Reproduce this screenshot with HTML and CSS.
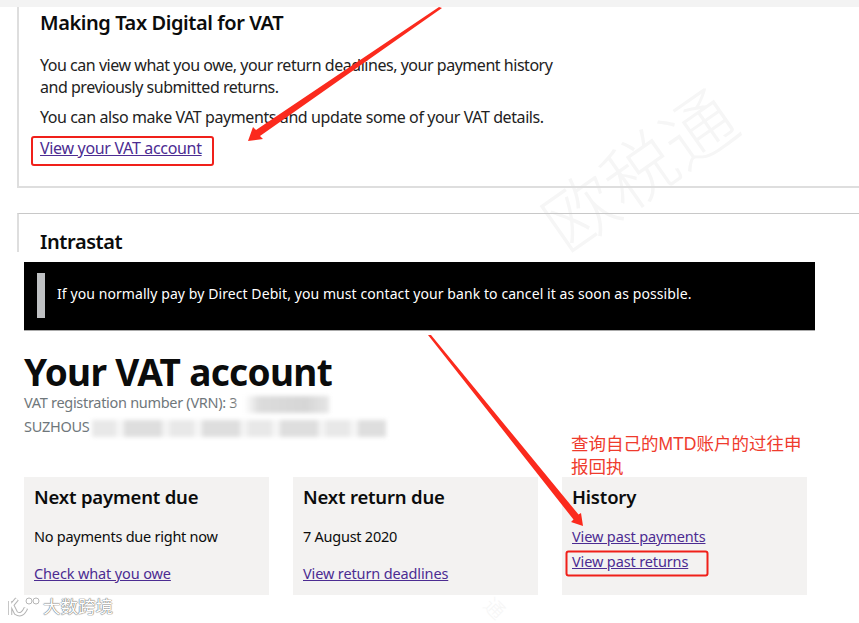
FILE: index.html
```html
<!DOCTYPE html>
<html lang="en">
<head>
    <meta charset="UTF-8">
    <title>Your VAT account</title>
    <meta name="viewport" content="width=device-width, initial-scale=1.0">
    <link rel="stylesheet" href="styles.css">
</head>
<body>
    <div class="strip"></div>

    <section class="panel panel-first">
        <h2>Making Tax Digital for VAT</h2>
        <p class="intro">You can view what you owe, your return deadlines, your payment history<br>and previously submitted returns.</p>
        <p class="also">You can also make VAT payments and update some of your VAT details.</p>
        <a href="#" class="account-link">View your VAT account</a>
    </section>

    <section class="panel panel-second">
        <h2>Intrastat</h2>
    </section>

    <div class="notice">
        <span class="notice-bar"></span>
        <p>If you normally pay by Direct Debit, you must contact your bank to cancel it as soon as possible.</p>
    </div>

    <header class="account-head">
        <h1>Your VAT account</h1>
        <p>VAT registration number (VRN): 3<span class="blur blur-vrn"></span></p>
        <p>SUZHOUS<span class="blur blur-name"></span></p>
    </header>

    <main class="cards">
        <section class="card">
            <h3>Next payment due</h3>
            <p>No payments due right now</p>
            <a href="#">Check what you owe</a>
        </section>
        <section class="card">
            <h3>Next return due</h3>
            <p>7 August 2020</p>
            <a href="#">View return deadlines</a>
        </section>
        <section class="card card-history">
            <h3>History</h3>
            <a href="#">View past payments</a>
            <a href="#">View past returns</a>
        </section>
    </main>

    <!-- marks drawn on top of the screenshot -->
    <div class="stamp stamp-big">欧税通</div>
    <div class="stamp stamp-low">通</div>

    <svg class="marks" width="859" height="623" viewBox="0 0 859 623">
        <polygon fill="#fb2a1d" points="439,7 442,8 260,136 263,139 248,141 253,127 256,130"/>
        <polygon fill="#fb2a1d" points="428,335 431,335 578.500,514.500 581,513 583,526 571,522 573.500,519.500"/>
        <rect x="32" y="137" width="181" height="28" rx="2" fill="none" stroke="#f0201a" stroke-width="2"/>
        <rect x="566.500" y="551.500" width="141" height="24" rx="2" fill="none" stroke="#f0201a" stroke-width="2"/>
    </svg>

    <p class="note">查询自己的MTD账户的过往申报回执</p>

    <div class="brand">
        <svg width="34" height="24" viewBox="0 0 34 24">
            <path d="M2 7 L2 21 M9 5 L4 11 L8 19 Q14 23 18 14" fill="none" stroke="#b5b5b5" stroke-width="4.500"/>
            <path d="M2 7 L2 21 M9 5 L4 11 L8 19 Q14 23 18 14" fill="none" stroke="#fff" stroke-width="2.500"/>
            <circle cx="21" cy="7" r="3" fill="#fff" stroke="#b5b5b5"/>
            <circle cx="28" cy="7" r="3" fill="#fff" stroke="#b5b5b5"/>
        </svg>
        <span>大数跨境</span>
    </div>
</body>
</html>
```

FILE: styles.css
```css
/* Page */
html, body {
    height: 623px;
    overflow: hidden;
}

body {
    margin: 0;
    position: relative;
    background: #fff;
    color: #0b0c0c;
    font-family: 'Noto Sans', 'Liberation Sans', sans-serif;
}

h1, h2, h3, p {
    margin: 0;
}

a {
    color: #4c2c92;
    text-decoration: underline;
}

.strip {
    height: 7px;
    background: #f3f3f3;
}

/* Top panels */
.panel {
    margin-left: 17px;
    padding-left: 21px;
    border-left: 2px solid #dedede;
}

.panel h2 {
    font-size: 20px;
    line-height: 26px;
    font-weight: 600;
    letter-spacing: -0.42px;
}

.panel-first {
    height: 176px;
    padding-top: 3px;
    border-bottom: 2px solid #dedede;
}

.panel-first p {
    font-size: 16px;
    line-height: 22px;
    letter-spacing: -0.47px;
    color: #222;
}

.panel-first .intro {
    margin-top: 18px;
}

.panel-first .also {
    margin-top: 8px;
    letter-spacing: -0.41px;
}

.account-link {
    display: block;
    margin-top: 9px;
    font-size: 16px;
    line-height: 22px;
    letter-spacing: -0.32px;
}

.panel-second {
    height: 39px;
    margin-top: 25px;
    padding-top: 18px;
    border-top: 1px solid #c8c8c8;
    box-sizing: border-box;
}

.panel-second h2 {
    line-height: 20px;
}

/* Black banner */
.notice {
    display: flex;
    align-items: center;
    gap: 12px;
    width: 791px;
    height: 69px;
    margin: 10px 0 0 24px;
    padding: 0 0 2px 13px;
    box-sizing: border-box;
    background: #000;
    border-bottom: 1px solid #aaa;
}

.notice-bar {
    width: 8px;
    height: 45px;
    background: #bfc1c3;
}

.notice p {
    margin-bottom: 3px;
    color: #fff;
    font-size: 14px;
    letter-spacing: 0.08px;
}

/* Heading block */
.account-head {
    margin: 23px 0 0 24px;
}

.account-head h1 {
    font-size: 37px;
    line-height: 36px;
    font-weight: 700;
    letter-spacing: -0.67px;
}

.account-head p {
    height: 24px;
    font-size: 14.500px;
    line-height: 24px;
    letter-spacing: -0.3px;
    color: #6f777b;
    white-space: nowrap;
}

.blur {
    display: inline-block;
    height: 17px;
    vertical-align: middle;
    filter: blur(2px);
}

.blur-vrn {
    width: 92px;
    background: linear-gradient(to right, #fff 8%, #dcdcdc 24%, #d6d6d6 75%, #e6e6e6);
}

.blur-name {
    width: 294px;
    margin-left: 3px;
    background: repeating-linear-gradient(to right, #e8e8e8 0 24px, #f5f5f5 24px 32px, #dedede 32px 70px, #f3f3f3 70px 78px);
}

/* Cards */
.cards {
    display: flex;
    gap: 24px;
    margin: 39px 0 0 24px;
}

.card {
    display: flex;
    flex-direction: column;
    align-items: flex-start;
    width: 245px;
    height: 118px;
    padding: 8px 10px 0;
    box-sizing: border-box;
    background: #f3f2f1;
}

.card h3 {
    font-size: 18.500px;
    line-height: 24px;
    font-weight: 600;
    letter-spacing: -0.18px;
}

.card p {
    margin-top: 17px;
    font-size: 14.500px;
    line-height: 20px;
    letter-spacing: -0.25px;
}

.card a {
    margin-top: 17px;
    font-size: 14.500px;
    line-height: 20px;
    letter-spacing: -0.13px;
}

.card-history a {
    margin-top: 5px;
}

.card-history h3 + a {
    margin-top: 17px;
}

/* Overlays */
.marks {
    position: absolute;
    top: 0;
    left: 0;
}

.note {
    position: absolute;
    left: 571px;
    top: 433px;
    width: 236px;
    font-family: 'Liberation Sans', 'Noto Sans CJK SC', sans-serif;
    font-size: 17.500px;
    line-height: 23px;
    color: #ef3b2d;
}

.stamp {
    position: absolute;
    font-family: 'Noto Sans CJK SC', sans-serif;
    font-weight: 300;
    color: #f6f6f6;
    transform: rotate(-35deg);
    z-index: -1;
}

.stamp-big {
    left: 529px;
    top: 127px;
    font-size: 72px;
    line-height: 80px;
}

.stamp-low {
    left: 485px;
    top: 598px;
    font-size: 20px;
    line-height: 20px;
    transform: rotate(45deg);
}

.brand {
    position: absolute;
    left: 8px;
    top: 594px;
    display: flex;
    align-items: center;
    gap: 1px;
}

.brand span {
    font-family: 'Noto Sans CJK SC', sans-serif;
    font-size: 17.500px;
    line-height: 24px;
    color: #fff;
    text-shadow: 0 0 1px #777, 0 0 1px #777, 0 0 1px #777;
}
```
